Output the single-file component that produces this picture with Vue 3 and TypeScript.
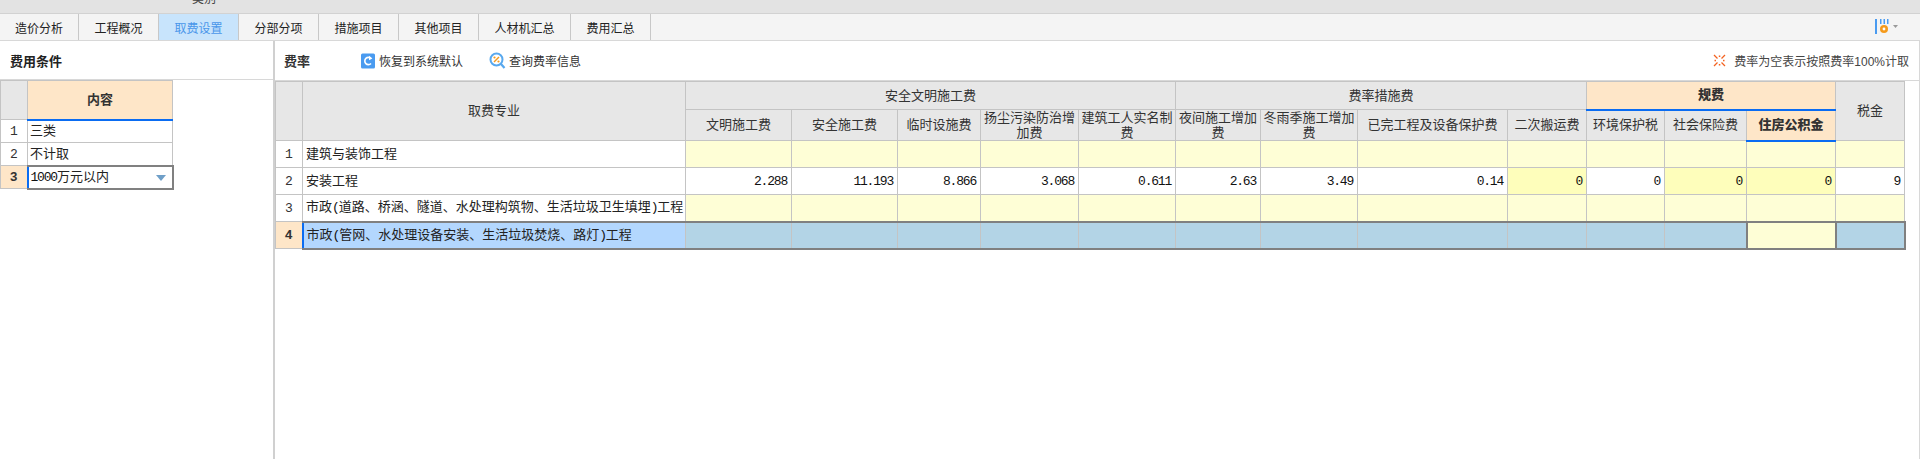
<script setup lang="ts">
const tabs = [
  { n: '造价分析', w: 79 }, { n: '工程概况', w: 80 }, { n: '取费设置', w: 80, on: true }, { n: '分部分项', w: 80 },
  { n: '措施项目', w: 80 }, { n: '其他项目', w: 80 }, { n: '人材机汇总', w: 92 }, { n: '费用汇总', w: 80 },
]
const widths = [27, 383, 106, 106, 83, 98, 97, 85, 97, 150, 79, 78, 82, 89, 69]
const rows: { name: string; cells: string[]; pale: boolean; sel?: boolean }[] = [
  { name: '建筑与装饰工程', pale: true, cells: Array(13).fill('') },
  { name: '安装工程', pale: false, cells: ['2.288','11.193','8.866','3.068','0.611','2.63','3.49','0.14','0','0','0','0','9'] },
  { name: '市政(道路、桥涵、隧道、水处理构筑物、生活垃圾卫生填埋)工程', pale: true, cells: Array(13).fill('') },
  { name: '市政(管网、水处理设备安装、生活垃圾焚烧、路灯)工程', pale: true, sel: true, cells: Array(13).fill('') },
]
const strong = new Set([8, 10, 11])
function cellClass(r: typeof rows[number], i: number): string[] {
  const c: string[] = ['num']
  if (r.sel) c.push(i === 11 ? 'pale focus' : 'blue')
  if (r.sel && i === 12) c.push('edge')
  else if (r.pale && !r.sel) c.push('pale')
  else if (!r.sel && strong.has(i)) c.push('strong')
  return c
}
function parts(name: string): string[] {
  return name.split(/([()])/).filter((p) => p !== '')
}
</script>

<template>
  <div class="page">
    <div class="topbar"><span class="clip">类别</span></div>
    <div class="tabs">
      <div v-for="t in tabs" :key="t.n" class="tab" :class="{ on: t.on }" :style="{ width: t.w + 'px' }">{{ t.n }}</div>
      <div class="spacer"></div>
      <svg class="tool" width="23" height="18" viewBox="0 0 23 18">
        <rect x="0" y="1" width="2" height="15" fill="#4a9bf0" />
        <rect x="5" y="1" width="1.500" height="5" fill="#4a9bf0" />
        <rect x="8.500" y="1" width="1.500" height="5" fill="#4a9bf0" />
        <rect x="12" y="1" width="1.500" height="5" fill="#4a9bf0" />
        <circle cx="9" cy="11" r="4" fill="#f59a1b" />
        <circle cx="9" cy="11" r="1.400" fill="#fff" />
        <path d="M18 7h5l-2.500 3z" fill="#999" />
      </svg>
    </div>
    <div class="main">
      <aside class="left">
        <div class="phead"><b>费用条件</b></div>
        <table class="grid ltable">
          <colgroup><col style="width:27px" /><col style="width:145px" /></colgroup>
          <tbody>
            <tr class="lh"><th class="corner"></th><th class="act">内容</th></tr>
            <tr class="lr"><td class="idx">1</td><td class="txt">三类</td></tr>
            <tr class="lr"><td class="idx">2</td><td class="txt">不计取</td></tr>
            <tr class="lr">
              <td class="idx cur">3</td>
              <td class="txt drop"><span class="mono">1000</span>万元以内<i class="arrow"></i></td>
            </tr>
          </tbody>
        </table>
      </aside>
      <section class="right">
        <div class="phead rhead">
          <b>费率</b>
          <span class="btn first">
            <svg width="16" height="16" viewBox="0 0 16 16">
              <rect width="14" height="15" x="1" y="0.500" rx="1.500" fill="#4a9bf0" />
              <path d="M11 5.500a3.600 3.600 0 1 0 0 5" fill="none" stroke="#fff" stroke-width="1.600" />
              <path d="M9 2.800l3.400 2.600-3.400 1.800z" fill="#fff" />
            </svg>恢复到系统默认
          </span>
          <span class="btn second">
            <svg width="17" height="17" viewBox="0 0 17 17">
              <circle cx="7.500" cy="7.500" r="6" fill="#fff" stroke="#58a8ee" stroke-width="2" />
              <path d="M12 12l3.500 4" stroke="#58a8ee" stroke-width="2.200" />
              <path d="M5 10l5-5" stroke="#f59a1b" stroke-width="1.400" />
              <circle cx="5.500" cy="5.500" r="1.100" fill="#f59a1b" />
              <circle cx="9.500" cy="9.500" r="1.100" fill="#f59a1b" />
            </svg>查询费率信息
          </span>
          <span class="spacer"></span>
          <span class="note">
            <svg width="13" height="13" viewBox="0 0 13 13">
              <path d="M1 1l3.500 3.500M12 1L8.500 4.500M1 12l3.500-3.500M12 12L8.500 8.500" stroke="#f4621f" stroke-width="1.300" />
              <rect x="1.500" y="5.800" width="1.500" height="1.500" fill="#f4621f" />
              <rect x="10" y="5.800" width="1.500" height="1.500" fill="#f4621f" />
              <rect x="5.800" y="1.500" width="1.500" height="1.500" fill="#f4621f" />
              <rect x="5.800" y="10" width="1.500" height="1.500" fill="#f4621f" />
            </svg>费率为空表示按照费率100%计取
          </span>
        </div>
        <table class="grid rtable">
          <colgroup><col v-for="(w, i) in widths" :key="i" :style="{ width: w + 'px' }" /></colgroup>
          <tbody>
            <tr class="h1">
              <th rowspan="2" class="corner"></th>
              <th rowspan="2">取费专业</th>
              <th colspan="5">安全文明施工费</th>
              <th colspan="4">费率措施费</th>
              <th colspan="3" class="act under"><b>规费</b></th>
              <th rowspan="2">税金</th>
            </tr>
            <tr class="h2">
              <th>文明施工费</th><th>安全施工费</th><th>临时设施费</th>
              <th class="wrap">扬尘污染防治增加费</th><th class="wrap">建筑工人实名制费</th>
              <th class="wrap">夜间施工增加费</th><th class="wrap">冬雨季施工增加费</th>
              <th>已完工程及设备保护费</th><th>二次搬运费</th>
              <th>环境保护税</th><th>社会保险费</th><th class="act"><b>住房公积金</b></th>
            </tr>
            <tr v-for="(r, ri) in rows" :key="ri" class="dr" :class="{ selrow: r.sel }">
              <td class="idx" :class="{ cur: r.sel }">{{ ri + 1 }}</td>
              <td class="txt" :class="{ namesel: r.sel }"><template v-for="(p, pi) in parts(r.name)" :key="pi"><span v-if="p === '(' || p === ')'" class="mono">{{ p }}</span><template v-else>{{ p }}</template></template></td>
              <td v-for="(c, i) in r.cells" :key="i" :class="cellClass(r, i)"><span class="mono">{{ c }}</span></td>
            </tr>
          </tbody>
        </table>
      </section>
    </div>
  </div>
</template>

<style>
html, body { margin: 0; background: #fff; overflow: hidden; }
</style>

<style scoped>
.page { width: 1920px; height: 459px; display: flex; flex-direction: column; font-family: "Liberation Sans", "Noto Sans CJK SC", sans-serif; font-size: 13px; color: #222; overflow: hidden; }
.topbar { height: 13px; background: #e3e3e3; border-bottom: 1px solid #d2d2d2; overflow: hidden; position: relative; flex: none; }
.clip { position: absolute; left: 192px; top: -9px; font-size: 12px; color: #444; line-height: 16px; }
.tabs { height: 26px; background: #f4f4f4; border-bottom: 1px solid #d8d8d8; display: flex; flex: none; }
.tab { box-sizing: border-box; border-right: 1px solid #c8c8c8; display: flex; align-items: center; justify-content: center; font-size: 12px; color: #222; }
.tab.on { background: #c8e4fc; color: #4a96ea; }
.spacer { flex: 1; }
.tool { align-self: center; margin-right: 22px; }
.main { flex: 1; display: flex; min-height: 0; }
.left { width: 273px; box-sizing: border-box; flex: none; }
.right { flex: 1; border-left: 2px solid #d0d0d0; border-right: 1px solid #d8d8d8; min-width: 0; }
.phead { height: 39px; display: flex; align-items: center; padding-left: 10px; box-sizing: border-box; border-bottom: 1px solid #d8d8d8; font-size: 12px; }
.phead b { font-size: 13px; }
.rhead { padding-left: 9px; padding-right: 10px; height: 40px; color: #333; }
.btn { display: inline-flex; align-items: center; gap: 3px; font-size: 12px; }
.first { margin-left: 50px; }
.second { margin-left: 26px; }
.note { display: inline-flex; align-items: center; gap: 8px; font-size: 12px; color: #444; }
.grid { border-collapse: collapse; table-layout: fixed; background: #fff; }
.rtable { width: 1629px; }
.ltable { width: 172px; }
.ltable .txt { padding-left: 2px !important; }
.grid th, .grid td { border: 1px solid #c4c4c4; padding: 0; overflow: hidden; }
.grid th { background: #e7e7e7; font-weight: 400; font-size: 13px; line-height: 16px; color: #333; }
.grid th.corner { background: #e7e7e7; }
.grid th.act { background: #fee6c8; font-weight: 700; border-bottom: 2px solid #0a6cf2; }
.grid th.wrap { padding: 0 2px; line-height: 15px; }
.lh { height: 39px; }
.lr { height: 23px; }
.h1 { height: 28px; }
.h2 { height: 30px; }
.dr { height: 27px; }
.idx { text-align: center; font-size: 13px; font-family: "Liberation Mono", monospace; color: #333; background: #fff; }
.idx.cur { background: #fee6c8; font-weight: 700; }
.txt { padding-left: 3px !important; white-space: nowrap; color: #222; line-height: 16px; }
.grid td.drop { position: relative; border: 2px solid #808080; border-left: 2px solid #0a6cf2; }
.arrow { position: absolute; right: 6px; top: 8px; width: 0; height: 0; border: 5px solid transparent; border-top: 6px solid #6f9fc8; border-bottom: 0; }
.mono { font-family: "Liberation Mono", monospace; font-size: 13px; letter-spacing: -1.2px; color: #111; }
.num { text-align: right; padding-right: 4px !important; }
.pale { background: #fefed6; }
.strong { background: #fefebb; }
.blue { background: #b3d4e6; }
.namesel { background: #b3d7fe; border-left: 2px solid #0a6cf2 !important; }
.selrow td:not(.idx) { border-top: 2px solid #808080; border-bottom: 2px solid #808080; }
.focus { border: 2px solid #808080 !important; }
.edge { border-right: 2px solid #808080 !important; }
</style>
